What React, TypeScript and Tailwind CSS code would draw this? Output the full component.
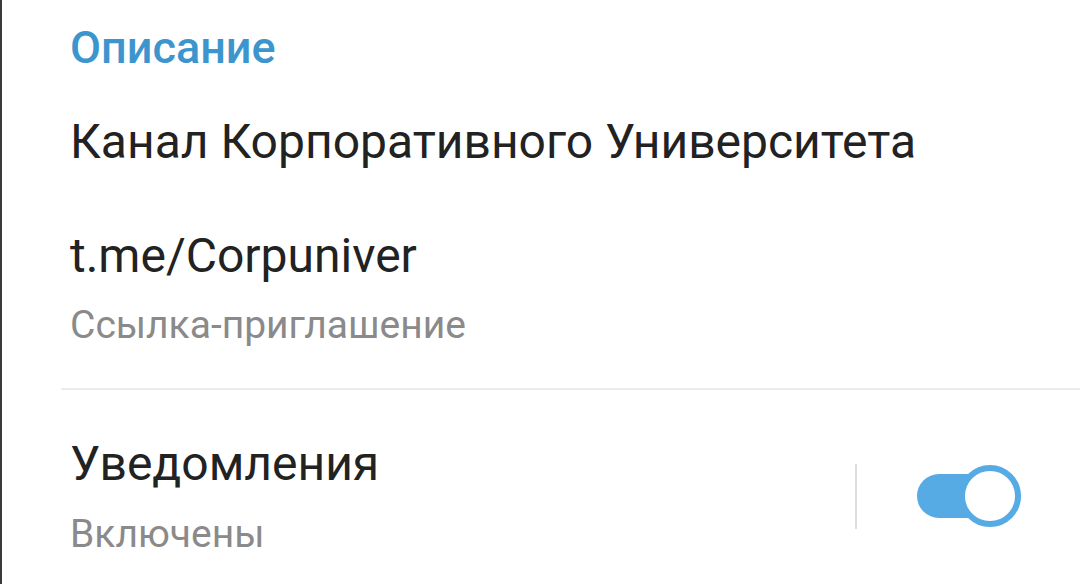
import React from "react";

const Toggle: React.FC = () => (
  <div className="relative w-[104px] h-[62px] shrink-0">
    <div className="absolute left-0 top-[9px] w-[80px] h-[44px] rounded-full bg-[#56abe4]" />
    <div className="absolute right-0 top-0 w-[62px] h-[62px] rounded-full border-[6px] border-[#56abe4] bg-white" />
  </div>
);

const App: React.FC = () => {
  return (
    <div
      className="w-[1080px] h-[584px] bg-white border-l-[2px] border-[#3a3a3a] overflow-hidden"
      style={{ fontFamily: "Roboto, 'Noto Sans', sans-serif" }}
    >
      <div className="pl-[68px] pt-[22px]">
        <h2 className="text-[45px] leading-[52px] font-medium text-[#3d95ce]">
          Описание
        </h2>
        <p className="mt-[40px] text-[48px] leading-[56px] text-[#222222]">
          Канал Корпоративного Университета
        </p>
        <p className="mt-[58px] text-[48px] leading-[56px] text-[#222222]">
          t.me/Corpuniver
        </p>
        <p className="mt-[19px] text-[39px] leading-[44px] text-[#8a8a8a]">
          Ссылка-приглашение
        </p>
      </div>
      <div className="ml-[59px] mt-[41px] h-[2px] bg-[#ececec]" />
      <div className="flex items-center pl-[68px] pr-[59px] pt-[46px]">
        <div className="flex-1">
          <p className="text-[48px] leading-[56px] text-[#222222]">Уведомления</p>
          <p className="mt-[20px] text-[39px] leading-[44px] text-[#8a8a8a]">
            Включены
          </p>
        </div>
        <div className="w-[2px] h-[65px] bg-[#dddddd] mr-[60px]" />
        <Toggle />
      </div>
    </div>
  );
};

export default App;
